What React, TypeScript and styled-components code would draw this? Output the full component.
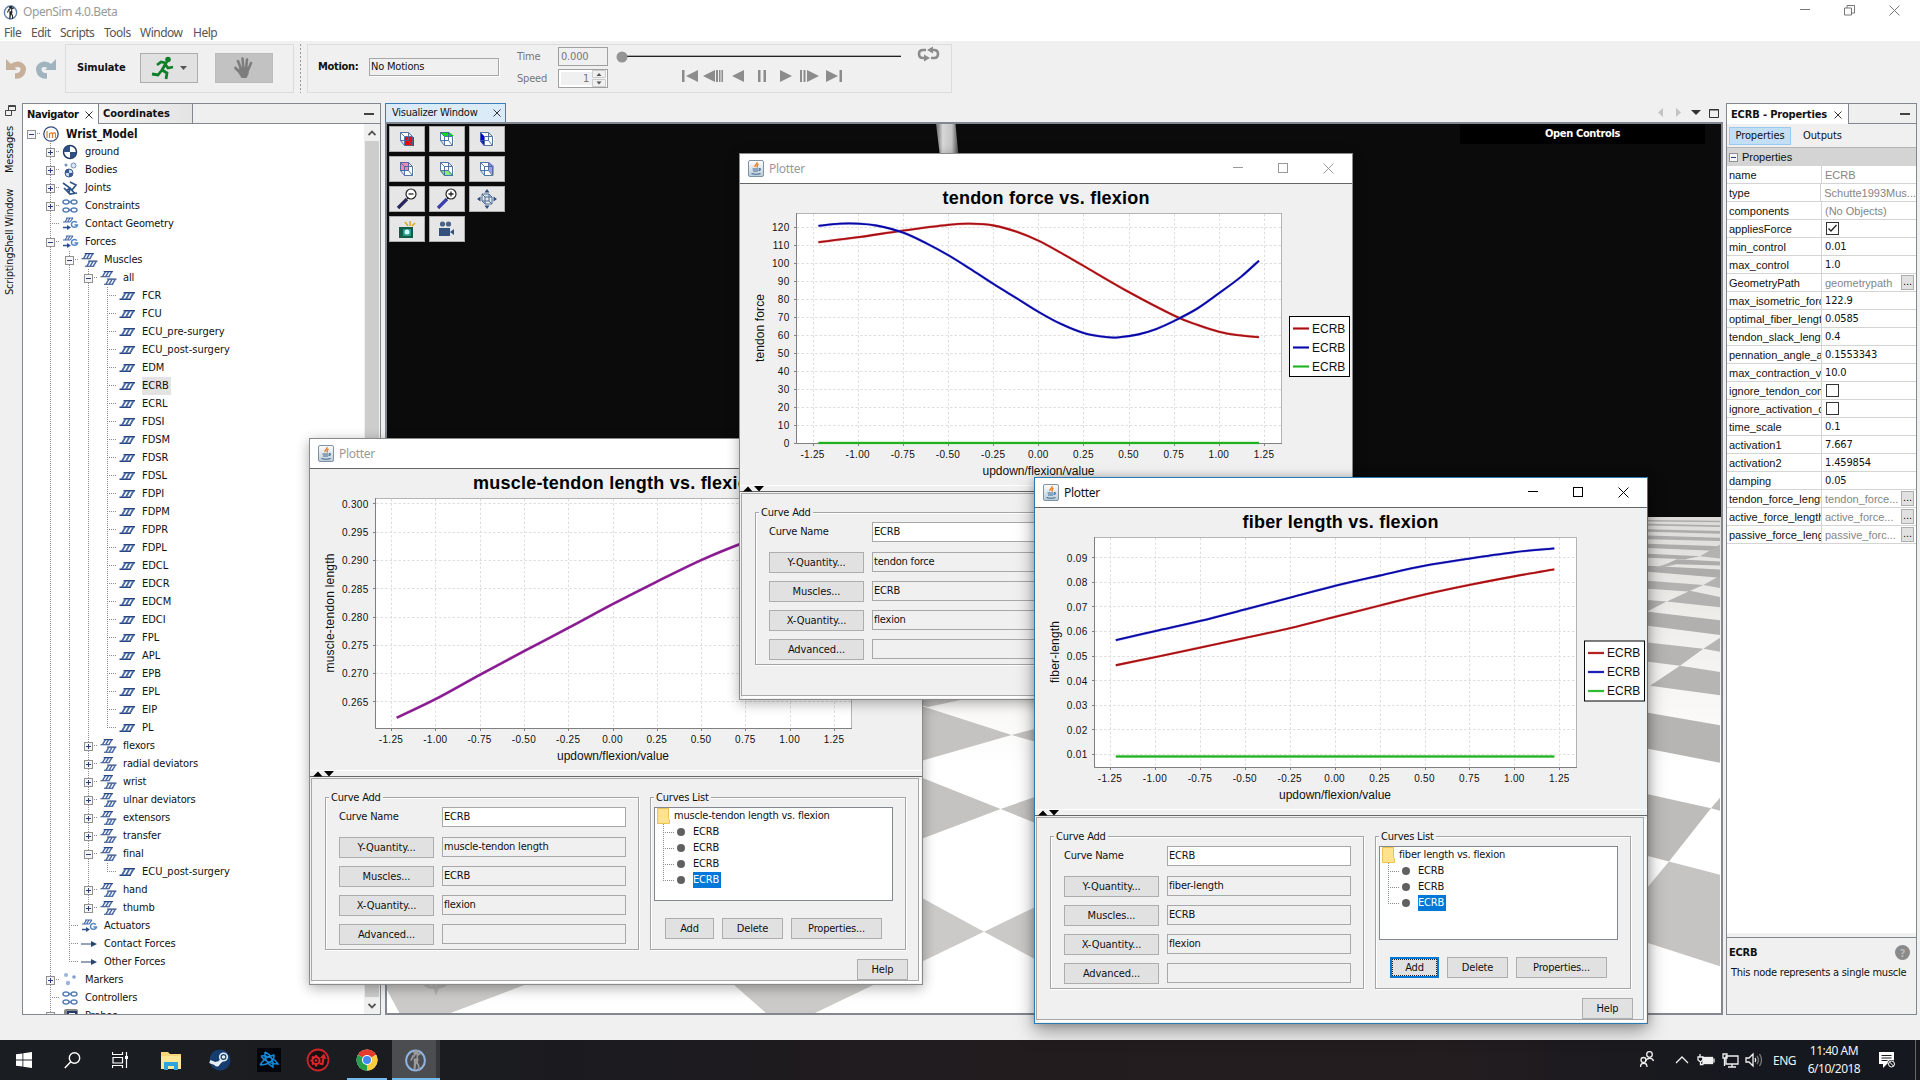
import React from 'react';
import styled, { createGlobalStyle, css } from 'styled-components';

const UI = '"DejaVu Sans Condensed","DejaVu Sans",sans-serif';
const ARIAL = '"Liberation Sans",Arial,sans-serif';
const SEGOE = '"Noto Sans","Open Sans",sans-serif';

const Global = createGlobalStyle`
  *{box-sizing:border-box}
  body{margin:0;background:#f0f0f0;overflow:hidden}
  svg{display:block;flex:none}
`;

/* ---------- shared ---------- */
const Screen = styled.div`
  width:1920px;height:1080px;overflow:hidden;position:relative;display:flex;flex-direction:column;
  background:#f0f0f0;font:11px/14px ${UI};font-stretch:condensed;color:#111;white-space:nowrap;
  letter-spacing:-0.2px;
`;
const Fill = styled.div`flex:1;min-width:0;`;
const Gap = styled.div<{ $w: number }>`width:${p => p.$w}px;flex:none;`;

/* ---------- header ---------- */
const Header = styled.header`height:41px;flex:none;background:#fff;`;
const TitleRow = styled.div`
  height:24px;display:flex;align-items:center;padding-left:3px;gap:5px;
  font:12px/16px ${SEGOE};letter-spacing:-0.4px;color:#999;
`;
const Controls = styled.div`
  display:flex;align-items:center;gap:34px;padding:0 20px 4px 0;
`;
const MenuRow = styled.nav`
  height:17px;display:flex;align-items:center;padding-left:4px;gap:9px;
  font:12px/16px ${SEGOE};letter-spacing:-0.5px;color:#555;
`;
const MenuItem = styled.span<{ $w: number }>`width:${p => p.$w}px;`;

const Toolbar = styled.div`height:62px;flex:none;display:flex;padding:3px 0 0 5px;`;
const UndoPair = styled.div`width:60px;display:flex;gap:6px;padding-top:12px;`;
const ToolGroup = styled.div<{ $w: number }>`
  width:${p => p.$w}px;height:49px;border:1px solid #dcdcdc;display:flex;align-items:center;padding-bottom:2px;
`;
const Bold = styled.b`font-weight:bold;letter-spacing:-0.1px;`;
const MotionLabel = styled(Bold)`width:51px;padding-bottom:1px;letter-spacing:-0.3px;`;
const ToolButton = styled.div<{ $off?: boolean }>`
  width:58px;height:30px;border:1px solid ${p => (p.$off ? '#bcbcbc' : '#adadad')};
  background:${p => (p.$off ? '#c2c2c2' : '#e1e1e1')};
  display:flex;align-items:center;justify-content:center;gap:5px;
`;
const DotSep = styled.div`width:1px;height:49px;margin:0 6px;background:repeating-linear-gradient(#999 0 2px,transparent 2px 4px);`;
const Combo = styled.div`width:130px;height:18px;border:1px solid #a8a8a8;box-shadow:1px 1px #fff;padding:1px 1px;margin-bottom:2px;`;
const Stack = styled.div<{ $w: number; $g: number }>`
  width:${p => p.$w}px;display:flex;flex-direction:column;gap:${p => p.$g}px;color:#777;
`;
const TimeField = styled.div`height:19px;border:1px solid #a0a0a0;padding:2px;color:#777;`;
const Spinner = styled.div`
  height:19px;border:1px solid #a0a0a0;background:#f0f0f0;display:flex;justify-content:flex-end;align-items:center;gap:3px;
  color:#777;box-shadow:inset 2px 2px #fff,inset -2px -2px #fff;
`;
const Player = styled.div`width:330px;height:46px;`;

/* ---------- main ---------- */
const Main = styled.main`height:912px;flex:none;display:flex;`;
const Strip = styled.aside`width:22px;display:flex;flex-direction:column;align-items:flex-start;padding:2px 0 0 5px;`;
const Vert = styled.div<{ $h: number }>`
  writing-mode:vertical-rl;transform:rotate(180deg);height:${p => p.$h}px;margin-top:${p => (p.$h > 50 ? 15 : 10)}px;margin-left:-2px;line-height:14px;text-align:right;
  letter-spacing:-0.2px;
`;
const Panel = styled.section<{ $w: number }>`
  width:${p => p.$w}px;flex:none;border:1px solid #828790;display:flex;flex-direction:column;background:#fff;overflow:hidden;
`;
const Tabs = styled.div`height:20px;flex:none;display:flex;background:#efefef;border-bottom:1px solid #828790;`;
const TabEnd = styled.div`padding:5px 6px 0 0;`;
const Tab = styled.div<{ $w: number; $on?: boolean }>`
  width:${p => p.$w}px;border-right:1px solid #828790;background:${p => (p.$on ? '#fff' : 'linear-gradient(90deg,#f3f3f3,#e4e4e4)')};
  display:flex;align-items:center;padding:1px 0 0 4px;gap:7px;font-weight:bold;letter-spacing:${p => (p.$w === 76 ? -0.4 : p.$w === 94 ? -0.05 : -0.15)}px;
  ${p => p.$on && css`margin-bottom:-1px;`}
`;
const NavBody = styled.div`flex:1;display:flex;min-height:0;`;
const Tree = styled.div`flex:1;overflow:hidden;margin-left:-1px;padding-top:1px;`;
const Scroll = styled.div`width:16px;background:#f0f0f0;display:flex;flex-direction:column;align-items:center;`;
const Thumb = styled.div`width:14px;flex:1;background:#cdcdcd;`;
const ArrowBox = styled.div`height:17px;display:flex;align-items:center;`;

const TRow = styled.div`height:18px;display:flex;align-items:center;`;
const dots = (d: string) => `repeating-linear-gradient(to ${d},#8c8c8c 0 1px,transparent 1px 2px)`;
const Col = styled.div<{ $v: 'full' | 'half' | 'none'; $h?: boolean }>`
  width:19px;height:18px;flex:none;display:flex;align-items:center;justify-content:center;
  background-repeat:no-repeat;
  background-image:${dots('bottom')},${dots('right')};
  background-size:${p => (p.$v === 'none' ? '0 0' : p.$v === 'half' ? '1px 9px' : '1px 18px')},${p => (p.$h ? '10px 1px' : '0 0')};
  background-position:9px 0,9px 8px;
`;
const Expander = styled.div`
  width:9px;height:9px;border:1px solid #919191;background:#f5f5f7;margin-right:1px;
`;
const IconSlot = styled.div`width:25px;display:flex;align-items:center;padding-left:2px;flex:none;`;
const Label = styled.span<{ $sel?: boolean; $bold?: boolean; $caps?: boolean }>`
  height:18px;line-height:18px;padding:0 2px 0 0;letter-spacing:${p => (p.$caps ? 0 : -0.15)}px;
  ${p => p.$sel && css`background:#e3e3e3;`}
  ${p => p.$bold && css`font-weight:bold;letter-spacing:0;font-size:11.5px;`}
`;

/* ---------- visualizer ---------- */
const Vis = styled.section`width:1338px;flex:none;display:flex;flex-direction:column;`;
const VisTabs = styled.div`height:19px;display:flex;align-items:center;`;
const VisTab = styled.div`
  width:121px;height:20px;border:1px solid #3d7fb5;border-bottom:0;background:#dcebf8;display:flex;align-items:center;
  padding-left:6px;justify-content:space-between;padding-right:4px;letter-spacing:-0.25px;
`;
const Canvas = styled.div`flex:1;border:2px solid #828790;position:relative;overflow:hidden;`;
const Pad = styled.div`
  position:absolute;left:2px;top:2px;display:grid;grid-template-columns:repeat(3,36px);grid-auto-rows:26px;gap:4px;
`;
const PadBtn = styled.div`background:#e6e6e6;border:1px solid #adadad;display:flex;align-items:center;justify-content:center;`;
const OpenControls = styled.div`
  position:absolute;left:1073px;top:0;width:245px;height:20px;background:#000;color:#fff;
  font:bold 11px/20px ${UI};letter-spacing:-0.35px;text-align:center;
`;

/* ---------- properties ---------- */
const PropBar = styled.div`height:24px;background:#f0f0f0;border-bottom:1px solid #b4b4b4;display:flex;align-items:center;padding-left:2px;gap:12px;letter-spacing:-0.1px;`;
const PropToggle = styled.div`width:62px;height:18px;background:#c2dff5;border:1px solid #99c9ef;line-height:16px;text-align:center;`;
const PropHead = styled.div`height:18px;background:#d4d4d4;display:flex;align-items:center;padding-left:2px;gap:3px;font:11px/18px ${ARIAL};letter-spacing:0;`;
const PropRow = styled.div`height:18px;display:flex;border-bottom:1px solid #d4d4d4;`;
const PName = styled.div`
  width:95px;border-right:1px solid #d4d4d4;padding-left:2px;overflow:hidden;font:11px/18px ${ARIAL};letter-spacing:0;
`;
const PVal = styled.div<{ $gray?: boolean }>`
  flex:1;padding-left:3px;display:flex;align-items:center;
  font:11px/17px ${p => (p.$gray ? ARIAL : UI)};letter-spacing:${p => (p.$gray ? '0' : '-0.15px')};
  color:${p => (p.$gray ? '#858585' : '#111')};${p => p.$gray && css`padding-top:1px;`}
`;
const Dots = styled.div`width:13px;height:15px;border:1px solid #adadad;background:#e1e1e1;color:#111;line-height:11px;text-align:center;margin:-1px 2px 0 0;`;
const Check = styled.div`width:13px;height:13px;border:1px solid #333;background:#fff;margin-left:1px;margin-top:-1px;`;
const Desc = styled.div`height:77px;border-top:1px solid #828790;background:#f0f0f0;box-shadow:0 -4px #f0f0f0;padding:7px 6px 0 2px;`;
const DescHead = styled.div`display:flex;justify-content:space-between;align-items:center;font-weight:bold;height:15px;`;
const DescText = styled.div`padding:6px 0 0 2px;letter-spacing:-0.24px;`;

/* ---------- plotter ---------- */
const Win = styled.div<{ $x: number; $y: number; $on?: boolean }>`
  position:absolute;left:${p => p.$x}px;top:${p => p.$y}px;width:614px;height:547px;display:flex;flex-direction:column;
  border:1px solid ${p => (p.$on ? '#2a7ab8' : '#8a8a8a')};background:#f0f0f0;
  box-shadow:${p => (p.$on ? '0 8px 18px rgba(0,0,0,.35),0 0 8px rgba(0,0,0,.22)' : '0 3px 12px rgba(0,0,0,.32)')};
`;
const WTitle = styled.div<{ $on?: boolean }>`
  height:30px;flex:none;background:#fff;border-bottom:1px solid #666;display:flex;align-items:center;padding-left:8px;gap:5px;
  font:12px/16px ${SEGOE};letter-spacing:-0.3px;color:${p => (p.$on ? '#111' : '#999')};
`;
const WControls = styled.div`display:flex;gap:35px;padding-right:18px;`;
const Split = styled.div`height:7px;flex:none;border-top:1px solid #fff;border-bottom:1px solid #666;padding-left:3px;`;
const Lower = styled.div`flex:1;margin:1px 3px 3px 1px;border:1px solid #a8a8a8;box-shadow:2px 2px #fff;padding:18px 0 0 13px;`;
const Groups = styled.div`display:flex;gap:11px;height:153px;`;
const Group = styled.div<{ $w: number }>`
  width:${p => p.$w}px;border:1px solid #a5a5a5;box-shadow:1px 1px #fff,inset 1px 1px #fff;display:flex;flex-direction:column;
`;
const GTitle = styled.div`align-self:flex-start;height:15px;margin:-8px 0 2px 3px;padding:0 2px;background:#f0f0f0;line-height:15px;`;
const FRow = styled.div<{ $t?: number }>`height:21px;display:flex;padding-left:13px;margin-bottom:${p => p.$t ?? 8}px;`;
const FLabel = styled.div`width:95px;line-height:20px;margin-right:8px;`;
const Btn = styled.div<{ $w: number; $focus?: boolean }>`
  width:${p => p.$w}px;height:21px;flex:none;background:#e1e1e1;border:1px solid #adadad;text-align:center;line-height:19px;
  ${p => p.$focus && css`border:2px solid #0078d7;line-height:17px;outline:1px dotted #222;outline-offset:-3px;`}
`;
const FBtn = styled(Btn)`margin-right:8px;letter-spacing:-0.1px;`;
const Field = styled.div<{ $white?: boolean }>`
  width:184px;height:20px;border:1px solid #a8a8a8;background:${p => (p.$white ? '#fff' : '#f0f0f0')};padding-left:1px;line-height:18px;
`;
const List = styled.div`width:239px;height:94px;margin-left:3px;border:1px solid #828790;background:#fff;`;
const LRow = styled.div`height:16px;display:flex;align-items:center;padding-left:2px;`;
const LCol = styled.div<{ $last: boolean }>`
  width:22px;height:16px;margin-left:6px;background-repeat:no-repeat;
  background-image:${dots('bottom')},${dots('right')};background-size:1px ${p => (p.$last ? 9 : 16)}px,11px 1px;background-position:0 0,0 8px;
  padding:4px 0 0 14px;
`;
const Dot = styled.div`width:8px;height:8px;border-radius:4px;background:#606060;`;
const LText = styled.span<{ $sel?: boolean; $gap?: number }>`
  margin-left:${p => p.$gap ?? 3}px;line-height:16px;padding-right:2px;${p => p.$sel && css`background:#0078d7;color:#fff;`}
`;
const BRow = styled.div`display:flex;gap:8px;padding:17px 0 0 14px;`;
const Foot = styled.div`display:flex;justify-content:flex-end;padding:9px 10px 0 0;`;

/* ---------- taskbar ---------- */
const Taskbar = styled.footer`
  height:40px;margin-top:25px;flex:none;display:flex;align-items:center;color:#f3f3f3;
  background:linear-gradient(90deg,#1a1e22 0,#1b1b1f 30%,#231c1f 55%,#241d20 75%,#15181e 90%);
`;
const Slot = styled.div<{ $w: number; $run?: boolean; $on?: boolean }>`
  width:${p => p.$w}px;height:40px;display:flex;align-items:center;justify-content:center;
  ${p => p.$run && css`border-bottom:2px solid #76b9ed;padding-top:2px;`}
  ${p => p.$on && css`background:linear-gradient(90deg,#4b4d50 0 44px,#34363a 44px);padding-right:2px;`}
`;
const Tray = styled.div`display:flex;align-items:center;font:12px/19px ${SEGOE};letter-spacing:-0.5px;`;
const Clock = styled.div`width:66px;text-align:center;line-height:18px;letter-spacing:-0.5px;margin-left:-1px;`;

/* ---------- small glyphs ---------- */
const X = ({ s = 8, c = '#333', w = 1 }: { s?: number; c?: string; w?: number }) => (
  <svg width={s} height={s} viewBox={`0 0 ${s} ${s}`}><path d={`M.5 .5L${s - .5} ${s - .5}M${s - .5} .5L.5 ${s - .5}`} stroke={c} strokeWidth={w} fill="none" /></svg>
);
const Dash = ({ c = '#444', h = 2 }: { c?: string; h?: number }) => (
  <svg width="10" height="10" viewBox="0 0 10 10"><rect y="4" width="10" height={h} fill={c} /></svg>
);
const Box = ({ c }: { c: string }) => (
  <svg width="10" height="10" viewBox="0 0 10 10"><rect x=".5" y=".5" width="9" height="9" stroke={c} fill="none" /></svg>
);
const Sim = ({ s, c = '#5d7fae', f = '#222' }: { s: number; c?: string; f?: string }) => (
  <svg width={s} height={s} viewBox="0 0 22 22">
    <ellipse cx="11" cy="11" rx="9" ry="9.5" fill="none" stroke={c} strokeWidth="2" />
    <path d="M12 4.500L9 9l3 0zM9 5h4l1 6-2.500 4-.5 5h-2l.5-6z" fill={f} />
    <path d="M13 1v5M9 6l-2.500 5M13 6l3-2M12 12l2 4v4" stroke={f} strokeWidth="1.600" fill="none" />
    <circle cx="11" cy="3.500" r="2" fill={f} />
  </svg>
);
const Java = () => (
  <svg width="16" height="17" viewBox="0 0 16 17">
    <defs><linearGradient id="jv" x2="0" y2="1"><stop stopColor="#fff" /><stop offset="1" stopColor="#b9cbd8" /></linearGradient></defs>
    <rect x=".5" y=".5" width="15" height="16" rx="1.5" fill="url(#jv)" stroke="#7f93a5" />
    <path d="M9 2c1 2-3 3-2 5M10.500 4c-1.500 1-2 1.800-1 3.500" stroke="#e8791e" strokeWidth="1.300" fill="none" />
    <path d="M4.500 9h6M11 8.500c2 0 1.500 2-.5 2M5 11h5M3.500 13.500c2 1 7 1 9 0" stroke="#41698c" strokeWidth="1.200" fill="none" />
  </svg>
);
const musc = (x: number, y: number, s = 1) => (
  <g transform={`translate(${x} ${y}) scale(${s})`}>
    <path d="M4 .8H15.500M0 7.200H11.500" stroke="#27437c" strokeWidth="1.500" />
    <path d="M6 1L2.500 7M10 1L6.500 7M14 1L10.500 7" stroke="#4467a6" strokeWidth="1.800" />
  </g>
);
const forces = (
  <g><path d="M4 2H11M1 6H8M5.500 2L3 6M8 2L5.500 6M11 2L8 6" stroke="#4568a8" strokeWidth="1.200" fill="none" />
    <path d="M1 11.500h5" stroke="#2f5090" strokeWidth="1.500" /><path d="M5 9l4 2.500-4 2.500z" fill="#2f5090" />
    <path d="M15 6.500c-3-2-6-.5-5.500 2.500s5.500 3 6 0h-3" stroke="#4f86c6" strokeWidth="1.500" fill="none" /></g>
);
const chain = (y: number) => (
  <g stroke="#5580b8" strokeWidth="1.500" fill="none"><ellipse cx="4" cy={y} rx="3" ry="2" /><ellipse cx="12" cy={y} rx="3" ry="2" /><path d={`M6 ${y}h4`} /></g>
);
const IconSvg = styled.svg`overflow:visible;`;
const NodeIcon = ({ k }: { k: string }) => (
  <IconSvg width="17" height="16" viewBox="0 0 17 16">
    {k === 'm' && musc(.5, 4)}
    {k === 'mm' && <>{musc(.5, 1, .8)}{musc(4, 8.500, .8)}</>}
    {k === 'f' && forces}
    {k === 'g' && <><circle cx="8" cy="8" r="6.500" fill="#fff" stroke="#1f3a66" strokeWidth="1.500" /><path d="M8 8V1.500A6.500 6.500 0 0 0 1.500 8zM8 8v6.500A6.500 6.500 0 0 0 14.500 8z" fill="#2d4f84" /></>}
    {k === 'b' && <><circle cx="7" cy="11" r="4" fill="#cfdcee" stroke="#355a90" /><path d="M7 11V7a4 4 0 0 0-4 4zM7 11v4a4 4 0 0 0 4-4z" fill="#355a90" /><circle cx="11.500" cy="3.500" r="2.500" fill="#dbe6f4" stroke="#6f8fb8" /><circle cx="4" cy="3" r="1.500" fill="#6f8fb8" /></>}
    {k === 'k' && <><circle cx="4" cy="3" r="2" fill="#9db4da" /><circle cx="12" cy="5" r="1.800" fill="#7e9ccc" /><circle cx="6" cy="11" r="2.200" fill="#9db4da" /></>}
    {k === 'j' && <path d="M1 3l7 5-1 5M4 11l4-3 5 6M8 2l6 3-4 5M2 8l6 6 7-1" stroke="#2f5588" strokeWidth="1.700" fill="none" />}
    {k === 'c' && <>{chain(4)}{chain(12)}</>}
    {k === 'a' && <path d="M0 7.500h10V5l6 3-6 3V8.500H0z" fill="#2a4570" />}
    {k === 'p' && <><rect x="2" y="1" width="14" height="8" rx="2" fill="#888" /><rect x="6" y="4" width="8" height="7" fill="#fff" stroke="#233a66" strokeWidth="2" /></>}
    {k === 'r' && <><circle cx="8" cy="8" r="7.200" fill="#fff" stroke="#33507e" strokeWidth="1.300" /><path d="M4 5v7M6.500 12V7M6.500 8c2-2 3-1 3 0v4M9.500 8c2-2 3-1 3 0v4" stroke="#e07b2c" strokeWidth="1.200" fill="none" /></>}
  </IconSvg>
);

/* ---------- navigator tree ---------- */
interface Node { t: string; lv: number; i: string; e?: '+' | '-'; last?: boolean; sel?: boolean }
const muscles = ['FCR', 'FCU', 'ECU_pre-surgery', 'ECU_post-surgery', 'EDM', 'ECRB', 'ECRL', 'FDSI', 'FDSM', 'FDSR', 'FDSL', 'FDPI', 'FDPM', 'FDPR', 'FDPL', 'EDCL', 'EDCR', 'EDCM', 'EDCI', 'FPL', 'APL', 'EPB', 'EPL', 'EIP', 'PL'];
const nodes: Node[] = [
  { t: 'Wrist_Model', lv: 0, i: 'r', e: '-' },
  { t: 'ground', lv: 1, i: 'g', e: '+' },
  { t: 'Bodies', lv: 1, i: 'b', e: '+' },
  { t: 'Joints', lv: 1, i: 'j', e: '+' },
  { t: 'Constraints', lv: 1, i: 'c', e: '+' },
  { t: 'Contact Geometry', lv: 1, i: 'f' },
  { t: 'Forces', lv: 1, i: 'f', e: '-' },
  { t: 'Muscles', lv: 2, i: 'mm', e: '-' },
  { t: 'all', lv: 3, i: 'mm', e: '-' },
  ...muscles.map(t => ({ t, lv: 4, i: 'm', last: t === 'PL', sel: t === 'ECRB' })),
  ...['flexors', 'radial deviators', 'wrist', 'ulnar deviators', 'extensors', 'transfer'].map(t => ({ t, lv: 3, i: 'mm', e: '+' as const })),
  { t: 'final', lv: 3, i: 'mm', e: '-' },
  { t: 'ECU_post-surgery', lv: 4, i: 'm', last: true },
  { t: 'hand', lv: 3, i: 'mm', e: '+' },
  { t: 'thumb', lv: 3, i: 'mm', e: '+', last: true },
  { t: 'Actuators', lv: 2, i: 'f' },
  { t: 'Contact Forces', lv: 2, i: 'a' },
  { t: 'Other Forces', lv: 2, i: 'a', last: true },
  { t: 'Markers', lv: 1, i: 'k', e: '+' },
  { t: 'Controllers', lv: 1, i: 'c' },
  { t: 'Probes', lv: 1, i: 'p', e: '+' },
];
const PlusMinus = ({ e }: { e: '+' | '-' }) => (
  <Expander><svg width="7" height="7" viewBox="0 0 7 7"><path d={e === '+' ? 'M1 3.500h5M3.500 1v5' : 'M1 3.500h5'} stroke="#2c3e78" /></svg></Expander>
);
const TreeRow = ({ n }: { n: Node }) => (
  <TRow>
    {Array.from({ length: n.lv }, (_, i) => <Col key={i} $v={i === 0 ? 'none' : 'full'} />)}
    <Col $v={n.lv === 0 ? 'none' : n.last ? 'half' : 'full'} $h>{n.e && <PlusMinus e={n.e} />}</Col>
    <IconSlot><NodeIcon k={n.i} /></IconSlot>
    <Label $sel={n.sel} $bold={n.lv === 0} $caps={n.lv === 4}>{n.t}</Label>
  </TRow>
);

/* ---------- visualizer scene ---------- */
const Floor = () => (
  <svg width="1334" height="889" viewBox="387 124 1334 889">
    <defs>
      <linearGradient id="fl" x2="0" y2="1"><stop stopColor="#dddbd8" /><stop offset=".2" stopColor="#efedea" /><stop offset=".5" stopColor="#fff" /></linearGradient>
      <linearGradient id="bn"><stop stopColor="#666" /><stop offset=".3" stopColor="#d8d8d8" /><stop offset=".7" stopColor="#c4c4c4" /><stop offset="1" stopColor="#4a4a4a" /></linearGradient>
    </defs>
    <rect x="387" y="124" width="1334" height="393" fill="#0b0b0b" />
    <rect x="387" y="517" width="1334" height="497" fill="url(#fl)" />
    <path d="M936 124h19.500l3 32h-18.500z" fill="url(#bn)" />
    <g fill="#c4c3c1">
      <path d="M900 699h65l-37 8-28-8zM900 699L1011.700 735 900 767zM1011.700 735L1040 727.500v15.500z" />
      <path d="M900 769L1000.700 809 900 847zM1000.700 809l37-13v28z" />
      <path d="M984 931.700l54-26v55z" fill="#cac9c7" /><path d="M767 1014h46L984 931.700 900 886 733 984z" fill="#cbcac8" />
      <path d="M387 984h140l-79 30h-48l-13-24z" fill="#cbcac8" />
    </g>
    <path d="M424 984c5 5 15 4 22 1M434 985l2 7 3-7" stroke="#b2b1b0" strokeWidth="2.500" fill="none" />
    <g transform="translate(1600 500) scale(.33333 .37)" fill="#b7b5b3">
      <path d="M144 1045L207 977 360 1013V1260L144 1197z" fill="#c6c4c2" />
      <path d="M144 795L333 833 207 977 144 962zM333 833L360 805V840z" fill="#bebcba" />
      <path d="M144 575L360 609V710L144 672z" />
      <path d="M240 448L360 465V528L150 502zM144 385L310 402 240 448 144 437zM310 402L360 372V410z" />
      <path d="M144 302L360 325V365L144 340z" fill="#b2b0ae" />
      <path d="M215 268L270 245 360 262V290L200 274zM144 270L200 274 144 300zM144 218L310 230 265 247 144 240zM360 205V238L310 230z" fill="#b4b2b0" />
      <path d="M144 178L360 188V210L144 194zM144 145L300 152 255 160 144 156zM144 118L360 125V138L144 130zM230 160L360 166V177L200 173zM144 96L360 102V111L144 106zM144 79L360 84V91L144 86zM144 64L360 68V73L144 69zM144 54L360 56V60L144 58z" fill="#aeacaa" />
      <path d="M300 152L360 120V158zM144 190L200 172 230 174z" fill="#b4b2b0" />
    </g>
  </svg>
);
const Cube = ({ f, d }: { f: string; d: string }) => (
  <svg width="18" height="18" viewBox="0 0 18 18">
    <path d="M2 2h9v9H2zM6 6h10v10H6z" fill="#fff" />
    <path d={d} fill={f} />
    <path d="M2.500 2.500h8v8h-8zM6.500 6.500h8v9h-8zM2.500 2.500l4 4M10.500 2.500l4 4M2.500 10.500l4 5M10.500 10.500l4 5" stroke="#42659a" strokeWidth=".9" fill="none" />
  </svg>
);
const Mag = ({ plus, c }: { plus?: boolean; c: string }) => (
  <svg width="24" height="22" viewBox="0 0 24 22">
    <path d="M3 20L12 11" stroke={c} strokeWidth="3.200" /><path d="M11 12l3-3" stroke="#333" />
    <circle cx="16" cy="6" r="5" fill="#fff" stroke="#222" strokeWidth="1.200" />
    <path d={plus ? 'M13.500 6h5M16 3.500v5' : 'M13.500 6h5'} stroke="#222" strokeWidth="1.300" />
  </svg>
);

/* ---------- charts ---------- */
interface Chart {
  title: string; yLabel: string; left: number; x0: number; x1: number; yTop: number; yBase: number; vTop: number; vBase: number;
  step: number; dec: number; tickEnd: number; titleX: number; legendY?: number; titleLen: number; yLen: number;
  series: { c: string; halo: string; w: number; pts: [number, number][] }[];
}
const RED = { c: '#a80f12', halo: '#e05050', w: 2.5 };
const BLUE = { c: '#0808a4', halo: '#5a5ae0', w: 2.5 };
const GREEN = { c: '#22b022', halo: '#60e060', w: 2.8 };

const smooth = (p: number[][]) => {
  let d = `M${p[0][0]} ${p[0][1]}`;
  for (let i = 0; i < p.length - 1; i++) {
    const a = p[Math.max(0, i - 1)], b = p[i], c = p[i + 1], e = p[Math.min(p.length - 1, i + 2)];
    d += `C${b[0] + (c[0] - a[0]) / 6} ${b[1] + (c[1] - a[1]) / 6} ${c[0] - (e[0] - b[0]) / 6} ${c[1] - (e[1] - b[1]) / 6} ${c[0]} ${c[1]}`;
  }
  return d;
};

const Plot = ({ c }: { c: Chart }) => {
  const sx = (v: number) => c.x0 + ((v + 1.25) / 2.5) * (c.x1 - c.x0);
  const sy = (v: number) => c.yBase + ((v - c.vBase) / (c.vTop - c.vBase)) * (c.yTop - c.yBase);
  const xs = Array.from({ length: 11 }, (_, i) => -1.25 + i * 0.25);
  const n = Math.round((c.vTop - c.vBase) / c.step);
  const ys = Array.from({ length: n + 1 }, (_, i) => c.vBase + i * c.step);
  return (
    <svg width="612" height="301" viewBox="1 31 612 301" fontFamily={ARIAL} letterSpacing="0" fill="#111">
      <text x={c.titleX} y="50.500" textAnchor="middle" fontSize="18" fontWeight="bold" textLength={c.titleLen} fill="#000">{c.title}</text>
      <rect x={c.left + .5} y="60.500" width={542 - c.left} height="230" fill="#fff" stroke="#b4b4b4" />
      <g stroke="#dedede" strokeDasharray="2.500 2">
        {xs.map(v => <path key={v} d={`M${Math.round(sx(v)) + .5} 61V290`} />)}
        {ys.map(v => <path key={v} d={`M${c.left + 1} ${Math.round(sy(v)) + .5}H542`} />)}
      </g>
      <path d={`M${c.left + .5} 60V290.500H543`} stroke="#808080" fill="none" />
      <g stroke="#808080">
        {xs.map(v => <path key={v} d={`M${Math.round(sx(v)) + .5} 291v2`} />)}
        {ys.map(v => <path key={v} d={`M${c.left - 2} ${Math.round(sy(v)) + .5}h2`} />)}
      </g>
      {c.series.map((s, i) => {
        const d = smooth(s.pts.map(([x, y]) => [sx(x) + .4, sy(y) + .5]));
        return <g key={i} fill="none"><path d={d} stroke={s.halo} strokeWidth={s.w} strokeOpacity=".6" /><path d={d} stroke={s.c} strokeWidth={s.w - .7} /></g>;
      })}
      <g fontSize="10" letterSpacing=".3">
        {xs.map(v => <text key={v} x={sx(v)} y="304.500" textAnchor="middle">{v.toFixed(2)}</text>)}
        {ys.map(v => <text key={v} x={c.tickEnd} y={sy(v) + 4.3} textAnchor="end">{v.toFixed(c.dec)}</text>)}
      </g>
      <text x={(c.left + 542) / 2} y="322" textAnchor="middle" fontSize="12">updown/flexion/value</text>
      <text transform="translate(25 175) rotate(-90)" textAnchor="middle" fontSize="12" textLength={c.yLen}>{c.yLabel}</text>
      {c.legendY && (
        <g transform={`translate(550 ${c.legendY})`}>
          <rect x=".5" y=".5" width="60" height="60" fill="#fff" stroke="#000" />
          {[RED, BLUE, GREEN].map((k, i) => (
            <g key={i}>
              <path d={`M4 ${12.500 + i * 19}h16`} stroke={k.halo} strokeWidth="2.600" strokeOpacity=".6" />
              <path d={`M4 ${12.500 + i * 19}h16`} stroke={k.c} strokeWidth="1.700" />
              <text x="23" y={16.500 + i * 19} fontSize="12">ECRB</text>
            </g>
          ))}
        </g>
      )}
    </svg>
  );
};

const tendon: Chart = {
  title: 'tendon force vs. flexion', yLabel: 'tendon force', left: 57, x0: 73.6, x1: 525, yTop: 73.8, yBase: 290, vTop: 120, vBase: 0, step: 10, dec: 0,
  tickEnd: 50.5, titleX: 307, legendY: 163, titleLen: 207, yLen: 68,
  series: [
    { ...RED, pts: [[-1.22, 111.7], [-1, 114.5], [-.75, 118.2], [-.5, 121.4], [-.38, 122], [-.25, 121], [-.12, 117.5], [0, 112.5], [.12, 106], [.25, 98.5], [.5, 84], [.75, 71], [.88, 65.8], [1, 62], [1.1, 60.2], [1.22, 59]] },
    { ...BLUE, pts: [[-1.22, 120.8], [-1.1, 122], [-1, 122], [-.9, 121], [-.75, 117], [-.62, 111], [-.5, 104.5], [-.38, 97], [-.25, 88.5], [-.12, 80.5], [0, 73], [.12, 66.5], [.25, 61.3], [.38, 59], [.45, 59], [.55, 60.5], [.65, 63.5], [.75, 68], [.88, 75], [1, 83.5], [1.12, 92.5], [1.22, 101.5]] },
    { ...GREEN, pts: [[-1.22, 0.3], [1.22, 0.3]] },
  ],
};
const fiber: Chart = {
  title: 'fiber length vs. flexion', yLabel: 'fiber-length', left: 60, x0: 76, x1: 525.3, yTop: 80.3, yBase: 277, vTop: .09, vBase: .01, step: .01, dec: 2,
  tickEnd: 53.5, titleX: 306.5, legendY: 163.5, titleLen: 196, yLen: 62,
  series: [
    { ...RED, pts: [[-1.22, .0463], [-1, .0496], [-.75, .0535], [-.5, .0574], [-.25, .0614], [0, .066], [.25, .0706], [.5, .0751], [.75, .079], [1, .0825], [1.22, .0853]] },
    { ...BLUE, pts: [[-1.22, .0565], [-1, .0602], [-.75, .0643], [-.5, .069], [-.25, .0738], [0, .0786], [.25, .0828], [.5, .0868], [.75, .0897], [1, .0923], [1.22, .0938]] },
    { ...GREEN, pts: [[-1.22, .0092], [1.22, .0092]] },
  ],
};
const mtl: Chart = {
  title: 'muscle-tendon length vs. flexion', yLabel: 'muscle-tendon length', left: 66, x0: 82, x1: 525, yTop: 65.5, yBase: 263.4, vTop: .3, vBase: .265, step: .005, dec: 3,
  tickEnd: 59.5, titleX: 307.5, titleLen: 287, yLen: 119,
  series: [{ c: '#8a1a8f', halo: '#a040b0', w: 2.9, pts: [[-1.22, .2622], [-1, .2655], [-.75, .2698], [-.5, .274], [-.25, .2781], [0, .2823], [.25, .2863], [.5, .2901], [.75, .2933], [1, .296], [1.22, .298]] }],
};

const Plotter = ({ x, y, on, chart, quantity, curves }: { x: number; y: number; on?: boolean; chart: Chart; quantity: string; curves: number }) => {
  const ctl = on ? '#000' : '#999';
  return (
    <Win $x={x} $y={y} $on={on}>
      <WTitle $on={on}><Java /><span>Plotter</span><Fill /><WControls><Dash c={ctl} h={1} /><Box c={ctl} /><X s={11} c={ctl} /></WControls></WTitle>
      <Plot c={chart} />
      <Split><svg width="24" height="6" viewBox="0 0 24 6"><path d="M0 5.500L5 .5l4.500 5zM11 0h10l-5 5.500z" fill="#000" /></svg></Split>
      <Lower>
        <Groups>
          <Group $w={314}>
            <GTitle>Curve Add</GTitle>
            <FRow $t={10}><FLabel>Curve Name</FLabel><Field $white>ECRB</Field></FRow>
            {[['Y-Quantity...', quantity], ['Muscles...', 'ECRB'], ['X-Quantity...', 'flexion'], ['Advanced...', '']].map(([b, v]) => (
              <FRow key={b}><FBtn $w={95}>{b}</FBtn><Field>{v}</Field></FRow>
            ))}
          </Group>
          <Group $w={256}>
            <GTitle>Curves List</GTitle>
            <List>
              <LRow><svg width="13" height="16" viewBox="0 0 13 16"><path d="M.5 .5h11v10l1 1v4H.5z" fill="#ffe38c" stroke="#e8c552" /></svg><LText $gap={4}>{chart.title}</LText></LRow>
              {Array.from({ length: curves }, (_, i) => (
                <LRow key={i}><LCol $last={i === curves - 1}><Dot /></LCol><Gap $w={5} /><LText $sel={i === curves - 1}>ECRB</LText></LRow>
              ))}
            </List>
            <BRow><Btn $w={49} $focus={on}>Add</Btn><Btn $w={61}>Delete</Btn><Btn $w={91}>Properties...</Btn></BRow>
          </Group>
        </Groups>
        <Foot><Btn $w={51}>Help</Btn></Foot>
      </Lower>
    </Win>
  );
};

const props: [string, string, string][] = [
  ['name', 'ECRB', 'g'], ['type', 'Schutte1993Mus...', 'g'], ['components', '(No Objects)', 'g'], ['appliesForce', '', 'x'],
  ['min_control', '0.01', ''], ['max_control', '1.0', ''], ['GeometryPath', 'geometrypath', 'd'], ['max_isometric_force', '122.9', ''],
  ['optimal_fiber_length', '0.0585', ''], ['tendon_slack_length', '0.4', ''], ['pennation_angle_at', '0.1553343', ''], ['max_contraction_v', '10.0', ''],
  ['ignore_tendon_com', '', 'o'], ['ignore_activation_d', '', 'o'], ['time_scale', '0.1', ''], ['activation1', '7.667', ''], ['activation2', '1.459854', ''],
  ['damping', '0.05', ''], ['tendon_force_length', 'tendon_force...', 'd'], ['active_force_length', 'active_force...', 'd'], ['passive_force_leng', 'passive_forc...', 'd'],
];

export default function App() {
  return (
    <Screen>
      <Global />
      <Header>
        <TitleRow>
          <Sim s={15} /><span>OpenSim 4.0.Beta</span><Fill />
          <Controls><Dash c="#777" h={1} /><svg width="11" height="11" viewBox="0 0 11 11"><path d="M.5 3h7v7h-7zM3 3V.5h7.500V8H8" stroke="#777" fill="none" /></svg><X s={11} c="#777" /></Controls>
        </TitleRow>
        <MenuRow>
          {([['File', 18], ['Edit', 20], ['Scripts', 35], ['Tools', 27], ['Window', 44], ['Help', 25]] as [string, number][]).map(([t, w]) => <MenuItem key={t} $w={w}>{t}</MenuItem>)}
        </MenuRow>
      </Header>

      <Toolbar>
        <UndoPair>
          <svg width="23" height="24" viewBox="0 0 23 24"><path d="M6 11c7-6 14-1 12 4-1 4-4 5-8 5" stroke="#c6b09a" strokeWidth="5.500" fill="none" /><path d="M1 3v11h11z" fill="#c6b09a" /></svg>
          <svg width="23" height="24" viewBox="0 0 23 24"><path d="M17 11C10 5 3 10 5 15c1 4 4 5 8 5" stroke="#9fb4bf" strokeWidth="5.500" fill="none" /><path d="M22 3v11H11z" fill="#9fb4bf" /></svg>
        </UndoPair>
        <ToolGroup $w={229}>
          <Gap $w={11} /><Bold>Simulate</Bold><Fill />
          <ToolButton>
            <svg width="24" height="24" viewBox="0 0 24 24"><circle cx="17" cy="3.500" r="2.800" fill="#0d7f27" /><path d="M6 9l4-3 5 1-4 7 5 3-1 6M11 14l-4 5-6-1M14 8l3 4 5-1" stroke="#0d7f27" strokeWidth="2.800" fill="none" /></svg>
            <svg width="7" height="4" viewBox="0 0 7 4"><path d="M0 0h7L3.500 4z" fill="#555" /></svg>
          </ToolButton>
          <Gap $w={17} />
          <ToolButton $off><svg width="20" height="21" viewBox="0 0 20 21"><path d="M4 4l3 8M8.500 1.500l.8 9M13 2.500l-.8 8M17 6l-2.500 6M1.500 11l5 5" stroke="#7d7d7d" strokeWidth="2.600" strokeLinecap="round" /><path d="M5.500 10h10l-1 7-2 4h-5l-3-5z" fill="#7d7d7d" /></svg></ToolButton>
          <Gap $w={20} />
        </ToolGroup>
        <DotSep />
        <ToolGroup $w={645}>
          <Gap $w={10} /><MotionLabel>Motion:</MotionLabel><Combo>No Motions</Combo>
          <Gap $w={18} />
          <Stack $w={41} $g={8}><span>Time</span><span>Speed</span></Stack>
          <Stack $w={50} $g={3}>
            <TimeField>0.000</TimeField>
            <Spinner><span>1</span><svg width="15" height="17" viewBox="0 0 15 17"><path d="M.5 .5h13v7H.5zM.5 9.500h13v7H.5z" fill="#f0f0f0" stroke="#ccc" /><path d="M4.500 6L7 3l2.500 3zM4.500 11.500h5L7 14.500z" fill="#555" /></svg></Spinner>
          </Stack>
          <Gap $w={8} />
          <Player>
            <svg width="330" height="47" viewBox="616 45 330 47">
              <path d="M622 56.500H901" stroke="#222" /><path d="M622 55.500H901" stroke="#aaa" />
              <circle cx="622" cy="57" r="5.500" fill="#949494" />
              <path d="M926 50h-3q-4 0-4 4t4 4h1M931 58h3q4 0 4-4t-4-4h-1" stroke="#8c8c8c" strokeWidth="2.600" fill="none" /><path d="M933 46.500v7l-6-3.500zM924 54.500v7l6-3.500z" fill="#8c8c8c" />
              <g fill="#8c8c8c" transform="translate(0 70)">
                <path d="M682 0h2.500v12H682zM698 0v12l-12-6zM715 0v12l-12-6zM716 0h2v12h-2zM719 0h1.500v12H719zM721.500 0h1.500v12h-1.500zM744 0v12l-12-6zM758 0h2.500v12H758zM763.500 0h2.500v12h-2.500zM780 0v12l12-6zM800 0h2v12h-2zM803.500 0h2v12h-2zM807 0v12l12-6zM826 0v12l12-6zM839.500 0h2.500v12h-2.500z" />
              </g>
            </svg>
          </Player>
        </ToolGroup>
      </Toolbar>

      <Main>
        <Strip>
          <svg width="11" height="11" viewBox="0 0 11 11"><path d="M3.500 .5h7v5h-7zM3.500 1.500h7M.5 5.500h6v5h-6z" stroke="#444" fill="#f0f0f0" /></svg>
          <Vert $h={48}>Messages</Vert>
          <Vert $h={106}>ScriptingShell Window</Vert>
        </Strip>
        <Panel $w={359}>
          <Tabs>
            <Tab $w={76} $on>Navigator<X /></Tab><Tab $w={94}>Coordinates</Tab><Fill />
            <TabEnd><Dash /></TabEnd>
          </Tabs>
          <NavBody>
            <Tree>{nodes.map((n, i) => <TreeRow key={i} n={n} />)}</Tree>
            <Scroll>
              <ArrowBox><svg width="8" height="6" viewBox="0 0 8 6"><path d="M.5 5L4 1.500 7.500 5" stroke="#555" strokeWidth="1.800" fill="none" /></svg></ArrowBox>
              <Thumb />
              <ArrowBox><svg width="8" height="6" viewBox="0 0 8 6"><path d="M.5 1L4 4.500 7.500 1" stroke="#555" strokeWidth="1.800" fill="none" /></svg></ArrowBox>
            </Scroll>
          </NavBody>
        </Panel>
        <Gap $w={4} />
        <Vis>
          <VisTabs>
            <VisTab>Visualizer Window<X /></VisTab><Fill />
            <svg width="70" height="12" viewBox="1653 104 70 12"><path d="M1663 105v9l-5-4.500zM1676 105v9l5-4.500z" fill="#c4c4c4" /><path d="M1691 107h10l-5 5z" fill="#333" /><path d="M1709.500 106.500h9v8h-9zM1709 107h10" stroke="#333" fill="none" /></svg>
          </VisTabs>
          <Canvas>
            <Floor />
            <Pad>
              <PadBtn><Cube f="#f00" d="M7 7h9v9H7z" /></PadBtn>
              <PadBtn><Cube f="#0d1" d="M2 2h9l5 4H6z" /></PadBtn>
              <PadBtn><Cube f="#00d" d="M2 2l4 4v10l-4-5z" /></PadBtn>
              <PadBtn><Cube f="rgba(220,60,140,.6)" d="M2 2h9v9H2z" /></PadBtn>
              <PadBtn><Cube f="rgba(90,220,90,.7)" d="M2 11h9l5 5H6z" /></PadBtn>
              <PadBtn><Cube f="rgba(90,90,220,.6)" d="M11 2l5 4v10l-5-5z" /></PadBtn>
              <PadBtn><Mag c="#26265a" /></PadBtn>
              <PadBtn><Mag plus c="#3c3cae" /></PadBtn>
              <PadBtn><svg width="22" height="20" viewBox="0 0 22 20"><path d="M6 5h7v7H6zM9 8h7v7H9zM6 5l3 3M13 5l3 3M6 12l3 3M13 12l3 3" stroke="#4a6a98" fill="none" /><path d="M11 0l2.500 3.500h-5zM11 20l2.500-3.500h-5zM1 10l3.500-2.500v5zM21 10l-3.500-2.500v5z" fill="#2a4f80" /></svg></PadBtn>
              <PadBtn><svg width="18" height="19" viewBox="0 0 18 19"><rect x="1" y="7" width="14" height="11" fill="#155c48" /><rect x="5" y="9" width="8" height="7" fill="#2a9a88" /><circle cx="9" cy="12" r="2.500" fill="#cff" /><path d="M12 6V1M10 6L7 2M14 6l3-3" stroke="#d8a820" strokeWidth="1.500" /></svg></PadBtn>
              <PadBtn><svg width="18" height="16" viewBox="0 0 18 16"><circle cx="4.500" cy="3" r="2.600" fill="#4a6288" /><circle cx="10.500" cy="3" r="2.600" fill="#4a6288" /><rect x="1" y="7" width="11" height="8" fill="#34507c" /><path d="M12 11l4-3v6z" fill="#34507c" /></svg></PadBtn>
            </Pad>
            <OpenControls>Open Controls</OpenControls>
          </Canvas>
        </Vis>
        <Gap $w={3} />
        <Panel $w={191}>
          <Tabs>
            <Tab $w={122} $on>ECRB - Properties<X /></Tab><Fill />
            <TabEnd><Dash /></TabEnd>
          </Tabs>
          <PropBar><PropToggle>Properties</PropToggle><span>Outputs</span></PropBar>
          <PropHead><PlusMinus e="-" />Properties</PropHead>
          {props.map(([n, v, k]) => (
            <PropRow key={n}>
              <PName>{n}</PName>
              <PVal $gray={k === 'g' || k === 'd'}>
                {v}
                {k === 'd' && <><Fill /><Dots>...</Dots></>}
                {k === 'x' && <Check><svg width="11" height="11" viewBox="0 0 11 11"><path d="M1.500 5.500L4 8l5.500-6" stroke="#222" strokeWidth="1.300" fill="none" /></svg></Check>}
                {k === 'o' && <Check />}
              </PVal>
            </PropRow>
          ))}
          <Fill />
          <Desc>
            <DescHead><span>ECRB</span><svg width="15" height="15" viewBox="0 0 15 15"><circle cx="7.500" cy="7.500" r="7.500" fill="#8a8a8a" /><text x="7.500" y="11.500" fontSize="11" textAnchor="middle" fill="#b8b8b8">?</text></svg></DescHead>
            <DescText>This node represents a single muscle</DescText>
          </Desc>
        </Panel>
      </Main>

      <Plotter x={309} y={438} chart={mtl} quantity="muscle-tendon length" curves={4} />
      <Plotter x={739} y={153} chart={tendon} quantity="tendon force" curves={3} />
      <Plotter x={1034} y={477} on chart={fiber} quantity="fiber-length" curves={3} />

      <Taskbar>
        <Slot $w={48}><svg width="16" height="16" viewBox="0 0 16 16"><path d="M0 2.300L6.500 1.400V7.600H0zM7.300 1.300L16 0v7.600H7.300zM0 8.400h6.500v6.200L0 13.700zM7.300 8.400H16V16l-8.700-1.300z" fill="#fff" /></svg></Slot>
        <Slot $w={48}><svg width="17" height="17" viewBox="0 0 17 17"><circle cx="10.500" cy="6" r="5.200" stroke="#fff" strokeWidth="1.400" fill="none" /><path d="M6.800 9.800L.8 16" stroke="#fff" strokeWidth="1.500" /></svg></Slot>
        <Slot $w={48}><svg width="17" height="16" viewBox="0 0 17 16"><path d="M.5 0v2.500h10V0M1 5.500h9.500v5.500H1zM.5 16v-2.500h10V16M14.500 0v16" stroke="#fff" strokeWidth="1.200" fill="none" /><rect x="13" y="4" width="3" height="3" fill="#fff" /></svg></Slot>
        <Slot $w={54}><svg width="22" height="19" viewBox="0 0 22 19"><path d="M1 1h7l2 2h11v15H1z" fill="#f5d67b" /><path d="M1 5h20v13H1z" fill="#ffe79a" /><path d="M4 11h14v8h-4v-4H8v4H4z" fill="#2ea3dc" /></svg></Slot>
        <Slot $w={44}><svg width="22" height="22" viewBox="0 0 22 22"><circle cx="11" cy="11" r="10.500" fill="#163d70" /><path d="M.8 12.500l7.500 3L14 10" stroke="#e8eef5" strokeWidth="3.200" fill="none" /><circle cx="14.500" cy="8" r="3.800" fill="#163d70" stroke="#e8eef5" strokeWidth="1.600" /><circle cx="14.500" cy="8" r="1.800" fill="#e8eef5" /><circle cx="8" cy="15" r="2.500" fill="#e8eef5" /></svg></Slot>
        <Slot $w={54}><svg width="24" height="24" viewBox="0 0 24 24"><rect width="24" height="24" fill="#020509" /><path d="M4 8c6-1 13 2 17 8-7 0-14-3-17-8M8 4c5 2 9 8 8 15-6-3-9-9-8-15M3 17c3-5 8-9 14-10 1 5-6 10-14 10" stroke="#1787d6" strokeWidth="1.500" fill="none" /></svg></Slot>
        <Slot $w={44}><svg width="24" height="24" viewBox="0 0 24 24"><circle cx="12" cy="12" r="10.500" fill="#1a1012" stroke="#c8262c" strokeWidth="1.800" /><circle cx="10" cy="12.500" r="3.600" fill="none" stroke="#e0262c" strokeWidth="2" /><path d="M10 7v2M10 16v2.500M4.500 12.500H7M6 8.500l1.500 1.500M6 16.500L7.500 15M13.500 15.500l3 .5 1-6" stroke="#e0262c" strokeWidth="2" fill="none" /><path d="M14 10l4-4.500 2.500 5.500z" fill="#e0262c" /><circle cx="10" cy="12.500" r="1.200" fill="#e0262c" /></svg></Slot>
        <Gap $w={7} />
        <Slot $w={40} $run><svg width="22" height="22" viewBox="0 0 22 22"><circle cx="11" cy="11" r="10.500" fill="#fff" /><path d="M11 11L1.900 5.750A10.500 10.500 0 0 1 20.100 5.750z" fill="#e33b2e" /><path d="M11 11L20.100 5.750A10.500 10.500 0 0 1 11 21.500z" fill="#fccc3a" /><path d="M11 11V21.500A10.500 10.500 0 0 1 1.900 5.750z" fill="#22a04c" /><circle cx="11" cy="11" r="5" fill="#fff" /><circle cx="11" cy="11" r="4" fill="#4487f4" /></svg></Slot>
        <Gap $w={5} />
        <Slot $w={48} $run $on><Sim s={23} c="#8fb2e0" f="#9a9a9a" /></Slot>
        <Fill />
        <Tray>
          <svg width="122" height="20" viewBox="1641 1050 122 20" fill="none" stroke="#f0f0f0" strokeWidth="1.300">
            <circle cx="1650.500" cy="1054.500" r="2.800" /><path d="M1646.500 1061c1-3 7-4 8 0" /><circle cx="1644.500" cy="1060" r="2.500" /><path d="M1641.500 1067c0-5 6.500-5 6.500 0" />
            <path d="M1677 1063l6-6 6 6" />
            <rect x="1704" y="1057.500" width="9.500" height="6" fill="#f0f0f0" /><path d="M1715 1058.500v4M1701 1054v3M1699 1057h5v3l-2.500 2-2.500-2zM1701.500 1062v2.500h3" />
            <path d="M1727 1056h12v8h-12zM1733 1064v3M1729 1067h8M1724 1054h4v4h-4zM1725.500 1058v8" />
            <path d="M1747 1058h3l4-4v12l-4-4h-3zM1756 1058q1.500 2 0 4" /><path d="M1758 1056q3 4 0 8M1760.500 1054q4 6 0 12" stroke="#777" />
          </svg>
          <Gap $w={11} /><span>ENG</span><Gap $w={6} />
          <Clock>11:40 AM<br />6/10/2018</Clock>
          <Gap $w={11} />
          <svg width="18" height="18" viewBox="0 0 18 18"><path d="M1 1h15v12H9l-4 4v-4H1z" fill="#fff" /><path d="M3.500 4.500h10M3.500 7h10M3.500 9.500h6" stroke="#1b1b1f" /><circle cx="13.500" cy="13" r="4" fill="#1b1b1f" /><circle cx="13.500" cy="13" r="3" stroke="#fff" fill="none" /><path d="M11.500 11l4 4" stroke="#fff" /></svg>
          <Gap $w={19} />
          <svg width="5" height="40" viewBox="0 0 5 40"><path d="M.5 0v40" stroke="#666" /></svg>
        </Tray>
      </Taskbar>
    </Screen>
  );
}
